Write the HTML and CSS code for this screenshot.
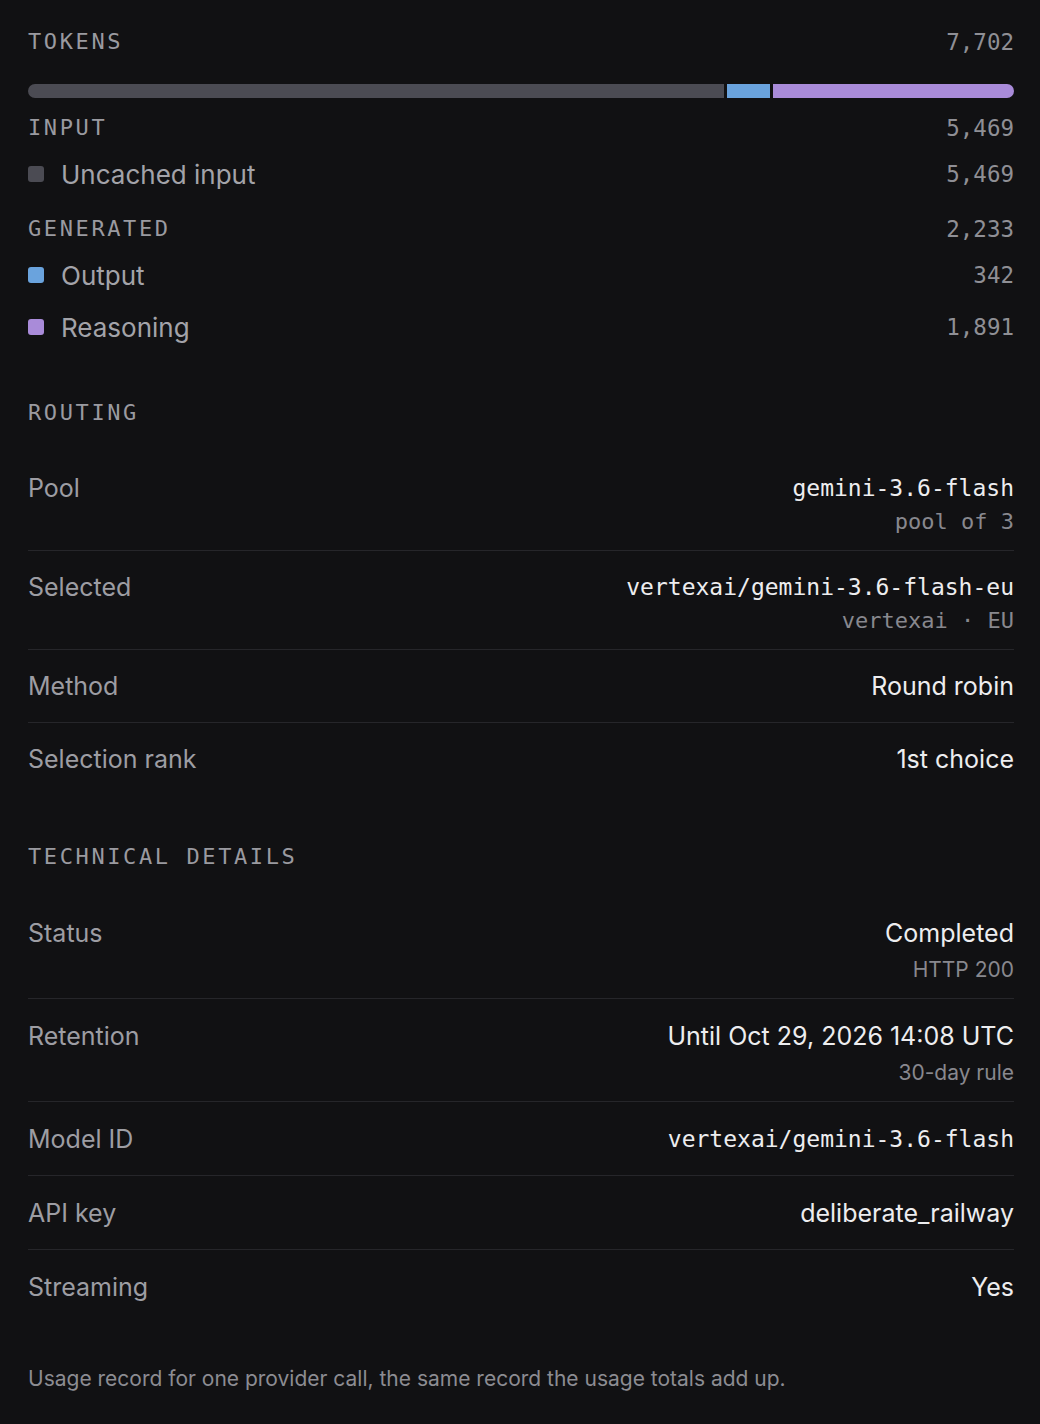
FILE: index.html
```html
<!DOCTYPE html>
<html>
  <head>
    <meta charset="UTF-8" />
    <title>Usage record</title>
    <link rel="stylesheet" href="styles.css">
  </head>
  <body>

    <div class="panel">

      <section class="tokens">
        <div class="head-row">
          <span class="caps">Tokens</span>
          <span class="num">7,702</span>
        </div>

        <div class="bar">
          <span class="seg seg-input" style="flex-grow: 5469;"></span>
          <span class="seg seg-output" style="flex-grow: 342;"></span>
          <span class="seg seg-reasoning" style="flex-grow: 1891;"></span>
        </div>

        <div class="group">
          <div class="head-row">
            <span class="caps">Input</span>
            <span class="num">5,469</span>
          </div>
          <div class="legend-row">
            <span class="swatch swatch-input"></span>
            <span class="legend-label">Uncached input</span>
            <span class="num">5,469</span>
          </div>
        </div>

        <div class="group">
          <div class="head-row">
            <span class="caps">Generated</span>
            <span class="num">2,233</span>
          </div>
          <div class="legend-row">
            <span class="swatch swatch-output"></span>
            <span class="legend-label">Output</span>
            <span class="num">342</span>
          </div>
          <div class="legend-row">
            <span class="swatch swatch-reasoning"></span>
            <span class="legend-label">Reasoning</span>
            <span class="num">1,891</span>
          </div>
        </div>
      </section>

      <section class="details routing">
        <h2 class="caps">Routing</h2>

        <div class="row">
          <span class="label">Pool</span>
          <div class="value">
            <span class="main mono">gemini-3.6-flash</span>
            <span class="sub mono">pool of 3</span>
          </div>
        </div>
        <div class="row">
          <span class="label">Selected</span>
          <div class="value">
            <span class="main mono">vertexai/gemini-3.6-flash-eu</span>
            <span class="sub mono">vertexai · EU</span>
          </div>
        </div>
        <div class="row">
          <span class="label">Method</span>
          <div class="value"><span class="main">Round robin</span></div>
        </div>
        <div class="row">
          <span class="label">Selection rank</span>
          <div class="value"><span class="main">1st choice</span></div>
        </div>
      </section>

      <section class="details technical">
        <h2 class="caps">Technical details</h2>

        <div class="row">
          <span class="label">Status</span>
          <div class="value">
            <span class="main">Completed</span>
            <span class="sub">HTTP 200</span>
          </div>
        </div>
        <div class="row">
          <span class="label">Retention</span>
          <div class="value">
            <span class="main">Until Oct 29, 2026 14:08 UTC</span>
            <span class="sub">30-day rule</span>
          </div>
        </div>
        <div class="row">
          <span class="label">Model ID</span>
          <div class="value"><span class="main mono">vertexai/gemini-3.6-flash</span></div>
        </div>
        <div class="row">
          <span class="label">API key</span>
          <div class="value"><span class="main">deliberate_railway</span></div>
        </div>
        <div class="row">
          <span class="label">Streaming</span>
          <div class="value"><span class="main">Yes</span></div>
        </div>
      </section>

      <p class="note">Usage record for one provider call, the same record the usage totals add up.</p>
    </div>

  </body>
</html>
```

FILE: styles.css
```css
body {
  margin: 0;
  background: #111113;
  color: #ececee;
  font-family: Inter, 'Noto Sans', sans-serif;
}

.panel {
  padding: 28px 26px 30px 28px;
}

.caps {
  font-family: 'DejaVu Sans Mono', monospace;
  font-size: 22px;
  font-weight: normal;
  letter-spacing: 2.6px;
  text-transform: uppercase;
  color: #9a9aa0;
  line-height: 28px;
  margin: 0;
}

.num {
  font-family: 'DejaVu Sans Mono', monospace;
  font-size: 22.5px;
  color: #8f8f95;
}

.mono {
  font-family: 'DejaVu Sans Mono', monospace;
}

/* tokens */
.head-row {
  display: flex;
  justify-content: space-between;
  align-items: center;
  height: 28px;
}

.bar {
  display: flex;
  gap: 3px;
  height: 14px;
  margin: 28px 0 16px;
  border-radius: 7px;
  overflow: hidden;
}

.seg {
  flex-basis: 0;
}

.seg-input, .swatch-input { background: #4b4b53; }
.seg-output, .swatch-output { background: #6aa3dd; }
.seg-reasoning, .swatch-reasoning { background: #a98bd9; }

.group {
  display: flex;
  flex-direction: column;
  gap: 12px;
}

.group + .group {
  margin-top: 21px;
}

.legend-row {
  display: flex;
  align-items: center;
  height: 40px;
}

.swatch {
  width: 16px;
  height: 16px;
  border-radius: 3px;
  margin-right: 17px;
}

.legend-label {
  flex: 1;
  font-size: 26px;
  color: #a3a3a9;
}

/* detail rows */
.details {
  margin-top: 52px;
}

.details + .details {
  margin-top: 48px;
}

.details h2 {
  margin-bottom: 25px;
}

.row {
  display: flex;
  justify-content: space-between;
  align-items: flex-start;
  padding: 15px 0;
  border-bottom: 1px solid #26262a;
}

.technical .row {
  padding: 15.5px 0;
}

.row:last-child {
  border-bottom: none;
}

.label {
  font-size: 25px;
  line-height: 42px;
  color: #9d9da3;
}

.value {
  display: flex;
  flex-direction: column;
  align-items: flex-end;
  text-align: right;
}

.main {
  font-size: 25px;
  line-height: 42px;
  color: #ededef;
}

.main.mono {
  font-size: 23px;
}

.sub {
  font-size: 21px;
  line-height: 26px;
  margin-top: 3px;
  color: #88888e;
}

.sub.mono {
  font-size: 22px;
  margin-top: 0;
}

.note {
  margin: 41px 0 0;
  font-size: 21px;
  line-height: 30px;
  color: #8c8c92;
}
```
